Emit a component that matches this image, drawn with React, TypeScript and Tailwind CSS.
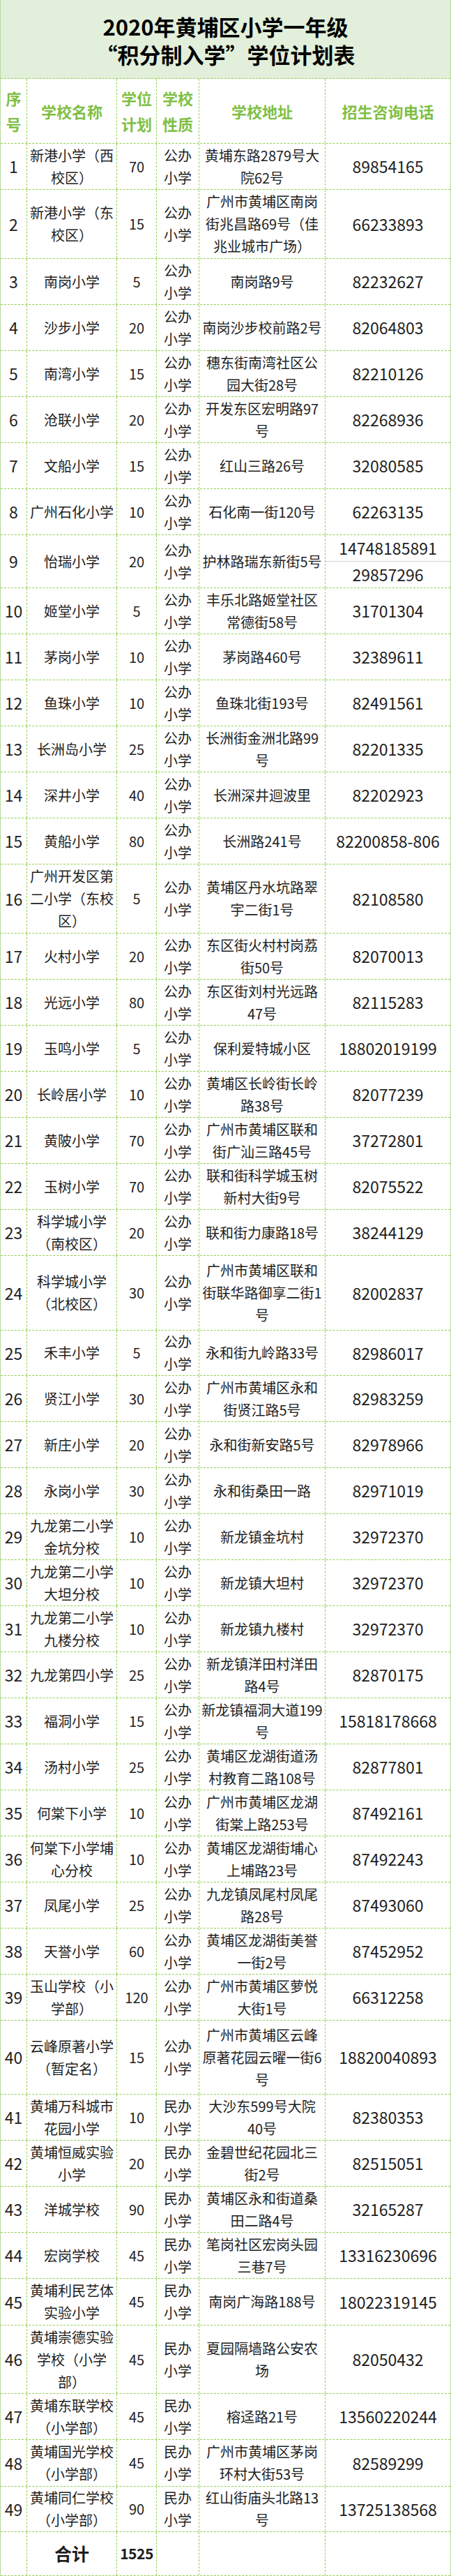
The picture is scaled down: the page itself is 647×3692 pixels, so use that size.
import React from 'react';

type Row = {
  n: number;
  name: string[];
  plan: string;
  kind: string;
  addr: string[];
  phone: string[];
  h: number;
};

const rows: Row[] = [
  { n: 1, name: ['新港小学（西', '校区）'], plan: '70', kind: '公办', addr: ['黄埔东路2879号大', '院62号'], phone: ['89854165'], h: 66 },
  { n: 2, name: ['新港小学（东', '校区）'], plan: '15', kind: '公办', addr: ['广州市黄埔区南岗', '街兆昌路69号（佳', '兆业城市广场）'], phone: ['66233893'], h: 99 },
  { n: 3, name: ['南岗小学'], plan: '5', kind: '公办', addr: ['南岗路9号'], phone: ['82232627'], h: 66 },
  { n: 4, name: ['沙步小学'], plan: '20', kind: '公办', addr: ['南岗沙步校前路2号'], phone: ['82064803'], h: 66 },
  { n: 5, name: ['南湾小学'], plan: '15', kind: '公办', addr: ['穗东街南湾社区公', '园大街28号'], phone: ['82210126'], h: 66 },
  { n: 6, name: ['沧联小学'], plan: '20', kind: '公办', addr: ['开发东区宏明路97', '号'], phone: ['82268936'], h: 66 },
  { n: 7, name: ['文船小学'], plan: '15', kind: '公办', addr: ['红山三路26号'], phone: ['32080585'], h: 66 },
  { n: 8, name: ['广州石化小学'], plan: '10', kind: '公办', addr: ['石化南一街120号'], phone: ['62263135'], h: 66 },
  { n: 9, name: ['怡瑞小学'], plan: '20', kind: '公办', addr: ['护林路瑞东新街5号'], phone: ['14748185891', '29857296'], h: 76 },
  { n: 10, name: ['姬堂小学'], plan: '5', kind: '公办', addr: ['丰乐北路姬堂社区', '常德街58号'], phone: ['31701304'], h: 66 },
  { n: 11, name: ['茅岗小学'], plan: '10', kind: '公办', addr: ['茅岗路460号'], phone: ['32389611'], h: 66 },
  { n: 12, name: ['鱼珠小学'], plan: '10', kind: '公办', addr: ['鱼珠北街193号'], phone: ['82491561'], h: 66 },
  { n: 13, name: ['长洲岛小学'], plan: '25', kind: '公办', addr: ['长洲街金洲北路99', '号'], phone: ['82201335'], h: 66 },
  { n: 14, name: ['深井小学'], plan: '40', kind: '公办', addr: ['长洲深井迴波里'], phone: ['82202923'], h: 66 },
  { n: 15, name: ['黄船小学'], plan: '80', kind: '公办', addr: ['长洲路241号'], phone: ['82200858-806'], h: 66 },
  { n: 16, name: ['广州开发区第', '二小学（东校', '区）'], plan: '5', kind: '公办', addr: ['黄埔区丹水坑路翠', '宇二街1号'], phone: ['82108580'], h: 99 },
  { n: 17, name: ['火村小学'], plan: '20', kind: '公办', addr: ['东区街火村村岗荔', '街50号'], phone: ['82070013'], h: 66 },
  { n: 18, name: ['光远小学'], plan: '80', kind: '公办', addr: ['东区街刘村光远路', '47号'], phone: ['82115283'], h: 66 },
  { n: 19, name: ['玉鸣小学'], plan: '5', kind: '公办', addr: ['保利爱特城小区'], phone: ['18802019199'], h: 66 },
  { n: 20, name: ['长岭居小学'], plan: '10', kind: '公办', addr: ['黄埔区长岭街长岭', '路38号'], phone: ['82077239'], h: 66 },
  { n: 21, name: ['黄陂小学'], plan: '70', kind: '公办', addr: ['广州市黄埔区联和', '街广汕三路45号'], phone: ['37272801'], h: 66 },
  { n: 22, name: ['玉树小学'], plan: '70', kind: '公办', addr: ['联和街科学城玉树', '新村大街9号'], phone: ['82075522'], h: 66 },
  { n: 23, name: ['科学城小学', '（南校区）'], plan: '20', kind: '公办', addr: ['联和街力康路18号'], phone: ['38244129'], h: 66 },
  { n: 24, name: ['科学城小学', '（北校区）'], plan: '30', kind: '公办', addr: ['广州市黄埔区联和', '街联华路御享二街1', '号'], phone: ['82002837'], h: 107 },
  { n: 25, name: ['禾丰小学'], plan: '5', kind: '公办', addr: ['永和街九岭路33号'], phone: ['82986017'], h: 65 },
  { n: 26, name: ['贤江小学'], plan: '30', kind: '公办', addr: ['广州市黄埔区永和', '街贤江路5号'], phone: ['82983259'], h: 66 },
  { n: 27, name: ['新庄小学'], plan: '20', kind: '公办', addr: ['永和街新安路5号'], phone: ['82978966'], h: 66 },
  { n: 28, name: ['永岗小学'], plan: '30', kind: '公办', addr: ['永和街桑田一路'], phone: ['82971019'], h: 66 },
  { n: 29, name: ['九龙第二小学', '金坑分校'], plan: '10', kind: '公办', addr: ['新龙镇金坑村'], phone: ['32972370'], h: 66 },
  { n: 30, name: ['九龙第二小学', '大坦分校'], plan: '10', kind: '公办', addr: ['新龙镇大坦村'], phone: ['32972370'], h: 66 },
  { n: 31, name: ['九龙第二小学', '九楼分校'], plan: '10', kind: '公办', addr: ['新龙镇九楼村'], phone: ['32972370'], h: 66 },
  { n: 32, name: ['九龙第四小学'], plan: '25', kind: '公办', addr: ['新龙镇洋田村洋田', '路4号'], phone: ['82870175'], h: 66 },
  { n: 33, name: ['福洞小学'], plan: '15', kind: '公办', addr: ['新龙镇福洞大道199', '号'], phone: ['15818178668'], h: 66 },
  { n: 34, name: ['汤村小学'], plan: '25', kind: '公办', addr: ['黄埔区龙湖街道汤', '村教育二路108号'], phone: ['82877801'], h: 66 },
  { n: 35, name: ['何棠下小学'], plan: '10', kind: '公办', addr: ['广州市黄埔区龙湖', '街棠上路253号'], phone: ['87492161'], h: 66 },
  { n: 36, name: ['何棠下小学埔', '心分校'], plan: '10', kind: '公办', addr: ['黄埔区龙湖街埔心', '上埔路23号'], phone: ['87492243'], h: 66 },
  { n: 37, name: ['凤尾小学'], plan: '25', kind: '公办', addr: ['九龙镇凤尾村凤尾', '路28号'], phone: ['87493060'], h: 66 },
  { n: 38, name: ['天誉小学'], plan: '60', kind: '公办', addr: ['黄埔区龙湖街美誉', '一街2号'], phone: ['87452952'], h: 66 },
  { n: 39, name: ['玉山学校（小', '学部）'], plan: '120', kind: '公办', addr: ['广州市黄埔区萝悦', '大街1号'], phone: ['66312258'], h: 66 },
  { n: 40, name: ['云峰原著小学', '（暂定名）'], plan: '15', kind: '公办', addr: ['广州市黄埔区云峰', '原著花园云曜一街6', '号'], phone: ['18820040893'], h: 106 },
  { n: 41, name: ['黄埔万科城市', '花园小学'], plan: '10', kind: '民办', addr: ['大沙东599号大院', '40号'], phone: ['82380353'], h: 66 },
  { n: 42, name: ['黄埔恒威实验', '小学'], plan: '20', kind: '民办', addr: ['金碧世纪花园北三', '街2号'], phone: ['82515051'], h: 66 },
  { n: 43, name: ['洋城学校'], plan: '90', kind: '民办', addr: ['黄埔区永和街道桑', '田二路4号'], phone: ['32165287'], h: 66 },
  { n: 44, name: ['宏岗学校'], plan: '45', kind: '民办', addr: ['笔岗社区宏岗头园', '三巷7号'], phone: ['13316230696'], h: 66 },
  { n: 45, name: ['黄埔利民艺体', '实验小学'], plan: '45', kind: '民办', addr: ['南岗广海路188号'], phone: ['18022319145'], h: 67 },
  { n: 46, name: ['黄埔崇德实验', '学校（小学', '部）'], plan: '45', kind: '民办', addr: ['夏园隔墙路公安农', '场'], phone: ['82050432'], h: 98 },
  { n: 47, name: ['黄埔东联学校', '（小学部）'], plan: '45', kind: '民办', addr: ['榕迳路21号'], phone: ['13560220244'], h: 66 },
  { n: 48, name: ['黄埔国光学校', '（小学部）'], plan: '45', kind: '民办', addr: ['广州市黄埔区茅岗', '环村大街53号'], phone: ['82589299'], h: 67 },
  { n: 49, name: ['黄埔同仁学校', '（小学部）'], plan: '90', kind: '民办', addr: ['红山街庙头北路13', '号'], phone: ['13725138568'], h: 65 },
];

const cell = 'flex flex-col items-center justify-center text-center border-r border-dashed border-[#92d050]';
const grid = 'grid grid-cols-[38px_129px_57px_61px_181px_179px] border-b border-dashed border-[#92d050]';

function Lines({ lines }: { lines: string[] }) {
  return (
    <>
      {lines.map((l, i) => (
        <div key={i} className="whitespace-nowrap">{l}</div>
      ))}
    </>
  );
}

export default function App() {
  return (
    <div className="w-[647px] bg-white font-['Noto_Sans_CJK_SC','Noto_Sans',sans-serif] text-[#1e1e1e] border-x border-[#b7d99c]">
      {/* Title */}
      <div className="h-[113px] bg-[#e2efda] border-b border-dashed border-[#92d050] flex flex-col items-center justify-center text-[31px] leading-[40px] font-bold text-black pt-[3px]">
        <div>2020年黄埔区小学一年级</div>
        <div>“积分制入学”学位计划表</div>
      </div>

      {/* Header */}
      <div className={`${grid} h-[93px] text-[#7fbf45] text-[22px] leading-[37px] font-bold`}>
        <div className={cell}><Lines lines={['序', '号']} /></div>
        <div className={cell}>学校名称</div>
        <div className={cell}><Lines lines={['学位', '计划']} /></div>
        <div className={cell}><Lines lines={['学校', '性质']} /></div>
        <div className={cell}>学校地址</div>
        <div className="flex items-center justify-center">招生咨询电话</div>
      </div>

      {/* Body */}
      {rows.map((r) => (
        <div key={r.n} className={grid} style={{ height: r.h }}>
          <div className={`${cell} text-[23px]`}>{r.n}</div>
          <div className={`${cell} text-[20px] leading-[32px]`}><Lines lines={r.name} /></div>
          <div className={`${cell} text-[20px]`}>{r.plan}</div>
          <div className={`${cell} text-[20px] leading-[32px]`}><Lines lines={[r.kind, '小学']} /></div>
          <div className={`${cell} text-[20px] leading-[32px]`}><Lines lines={r.addr} /></div>
          {r.phone.length > 1 ? (
            <div className="flex flex-col text-[23px]">
              <div className="flex-1 flex items-center justify-center border-b border-[#cfcfcf]">{r.phone[0]}</div>
              <div className="flex-1 flex items-center justify-center">{r.phone[1]}</div>
            </div>
          ) : (
            <div className="flex items-center justify-center text-[23px]">{r.phone[0]}</div>
          )}
        </div>
      ))}

      {/* Total */}
      <div className={`${grid} h-[63px]`}>
        <div className={cell}></div>
        <div className={`${cell} text-[25px] font-bold`}>合计</div>
        <div className={`${cell} text-[21px] font-bold tracking-[-0.5px]`}>1525</div>
        <div className={cell}></div>
        <div className={cell}></div>
        <div></div>
      </div>
    </div>
  );
}
